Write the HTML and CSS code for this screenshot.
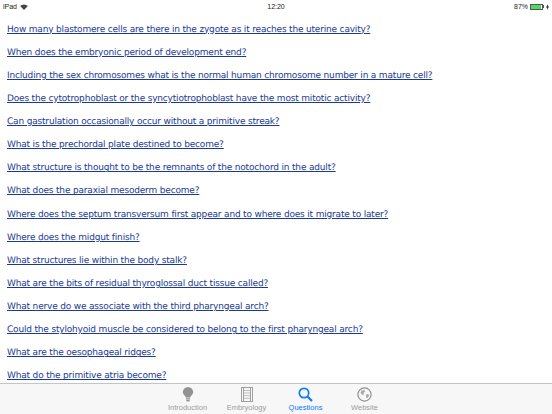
FILE: index.html
```html
<!DOCTYPE html>
<html lang="en">
<head>
    <meta charset="UTF-8">
    <title>Questions</title>
    <link rel="stylesheet" href="styles.css">
</head>
<body>
    <div class="status-bar">
        <div class="status-left">
            <span>iPad</span>
            <svg class="wifi" width="8" height="6" viewBox="0 0 9 7">
                <path d="M4.5 7 L0 2.4 A6.5 6.5 0 0 1 9 2.4 Z" fill="#444"/>
            </svg>
        </div>
        <div class="status-time">12:20</div>
        <div class="status-right">
            <span>87%</span>
            <span class="battery"><span class="battery-level"></span></span>
            <span class="battery-cap"></span>
            <svg width="3" height="6" viewBox="0 0 3 6">
                <path d="M2 0 L0 3.4 H1.2 L1 6 L3 2.6 H1.8 Z" fill="#222"/>
            </svg>
        </div>
    </div>

    <ul class="questions">
        <li><a href="#">How many blastomere cells are there in the zygote as it reaches the uterine cavity?</a></li>
        <li><a href="#">When does the embryonic period of development end?</a></li>
        <li><a href="#">Including the sex chromosomes what is the normal human chromosome number in a mature cell?</a></li>
        <li><a href="#">Does the cytotrophoblast or the syncytiotrophoblast have the most mitotic activity?</a></li>
        <li><a href="#">Can gastrulation occasionally occur without a primitive streak?</a></li>
        <li><a href="#">What is the prechordal plate destined to become?</a></li>
        <li><a href="#">What structure is thought to be the remnants of the notochord in the adult?</a></li>
        <li><a href="#">What does the paraxial mesoderm become?</a></li>
        <li><a href="#">Where does the septum transversum first appear and to where does it migrate to later?</a></li>
        <li><a href="#">Where does the midgut finish?</a></li>
        <li><a href="#">What structures lie within the body stalk?</a></li>
        <li><a href="#">What are the bits of residual thyroglossal duct tissue called?</a></li>
        <li><a href="#">What nerve do we associate with the third pharyngeal arch?</a></li>
        <li><a href="#">Could the stylohyoid muscle be considered to belong to the first pharyngeal arch?</a></li>
        <li><a href="#">What are the oesophageal ridges?</a></li>
        <li><a href="#">What do the primitive atria become?</a></li>
    </ul>

    <div class="tab-bar">
        <div class="tab">
            <svg width="12" height="15" viewBox="0 0 12 15">
                <path d="M6 0 A5.2 5.2 0 0 1 11.2 5.2 C11.2 7.6 8.6 8.6 8.2 10.6 H3.8 C3.4 8.6 0.8 7.6 0.8 5.2 A5.2 5.2 0 0 1 6 0 Z" fill="#929292"/>
                <rect x="4" y="11.2" width="4" height="1.3" fill="#929292"/>
                <rect x="4.4" y="13" width="3.2" height="1.4" fill="#929292"/>
            </svg>
            <span>Introduction</span>
        </div>
        <div class="tab">
            <svg width="12" height="15" viewBox="0 0 12 15">
                <rect x="0.5" y="0.5" width="11" height="14" fill="none" stroke="#a0a0a0"/>
                <path d="M2.5 1V14M9.5 1V14" stroke="#a0a0a0" fill="none"/>
                <path d="M3 3.5H9M3 6H9M3 8.7H9M3 11.3H9" stroke="#bdbdbd" fill="none"/>
            </svg>
            <span>Embryology</span>
        </div>
        <div class="tab active">
            <svg width="15" height="15" viewBox="0 0 15 15">
                <circle cx="6" cy="6" r="4.7" fill="none" stroke="#0a7aff" stroke-width="1.7"/>
                <path d="M9.5 9.5 L14 14" stroke="#0a7aff" stroke-width="2.2" fill="none"/>
            </svg>
            <span>Questions</span>
        </div>
        <div class="tab">
            <svg width="15" height="15" viewBox="0 0 15 15">
                <circle cx="7.5" cy="7.5" r="6.6" fill="none" stroke="#929292" stroke-width="1.2"/>
                <path d="M4.5 3.5 L7.5 3 L8 4.5 L6.5 6 L7 7.5 L5.5 8 L3.5 6 Z M9 7.5 L11.5 7 L12 9 L10 11.5 L9.2 10 Z" fill="#a8a8a8"/>
            </svg>
            <span>Website</span>
        </div>
    </div>
</body>
</html>
```

FILE: styles.css
```css
* {
    margin: 0;
    padding: 0;
    box-sizing: border-box;
}

body {
    width: 552px;
    height: 414px;
    overflow: hidden;
    display: flex;
    flex-direction: column;
    background: white;
    font-family: "Liberation Sans", Arial, sans-serif;
}

.status-bar {
    height: 13px;
    flex-shrink: 0;
    display: grid;
    grid-template-columns: 1fr auto 1fr;
    align-items: center;
    padding: 0 3px;
    font-size: 7px;
    color: #222;
}

.status-left {
    display: flex;
    align-items: center;
    gap: 3px;
}

.status-right {
    display: flex;
    align-items: center;
    justify-content: flex-end;
    gap: 1px;
}

.status-right span:first-child {
    margin-right: 1px;
}

.battery {
    width: 13px;
    height: 6px;
    border: 1px solid #555;
    padding: 0;
    display: block;
}

.battery-level {
    display: block;
    width: 87%;
    height: 100%;
    background: #4cd964;
}

.battery-cap {
    width: 1px;
    height: 3px;
    background: #555;
    margin-left: -1px;
    margin-right: 1px;
}

.questions {
    flex: 1;
    min-height: 0;
    list-style: none;
    padding: 9.6px 7px 0;
    font-family: "DejaVu Sans", Verdana, sans-serif;
    font-size: 9px;
    letter-spacing: -0.18px;
    text-rendering: geometricPrecision;
    overflow: hidden;
}

.questions li {
    height: 23.13px;
    line-height: 14px;
    white-space: nowrap;
}

.questions a {
    color: #1b3a94;
    text-decoration: underline;
}

.tab-bar {
    height: 31px;
    flex-shrink: 0;
    display: flex;
    justify-content: center;
    gap: 13px;
    background: #f7f7f7;
    border-top: 1px solid #c4c4c4;
    padding-top: 3px;
}

.tab {
    width: 46px;
    display: flex;
    flex-direction: column;
    align-items: center;
    gap: 1px;
    font-size: 7.5px;
    color: #9c9c9c;
}

.tab.active {
    color: #0a7aff;
}
```
